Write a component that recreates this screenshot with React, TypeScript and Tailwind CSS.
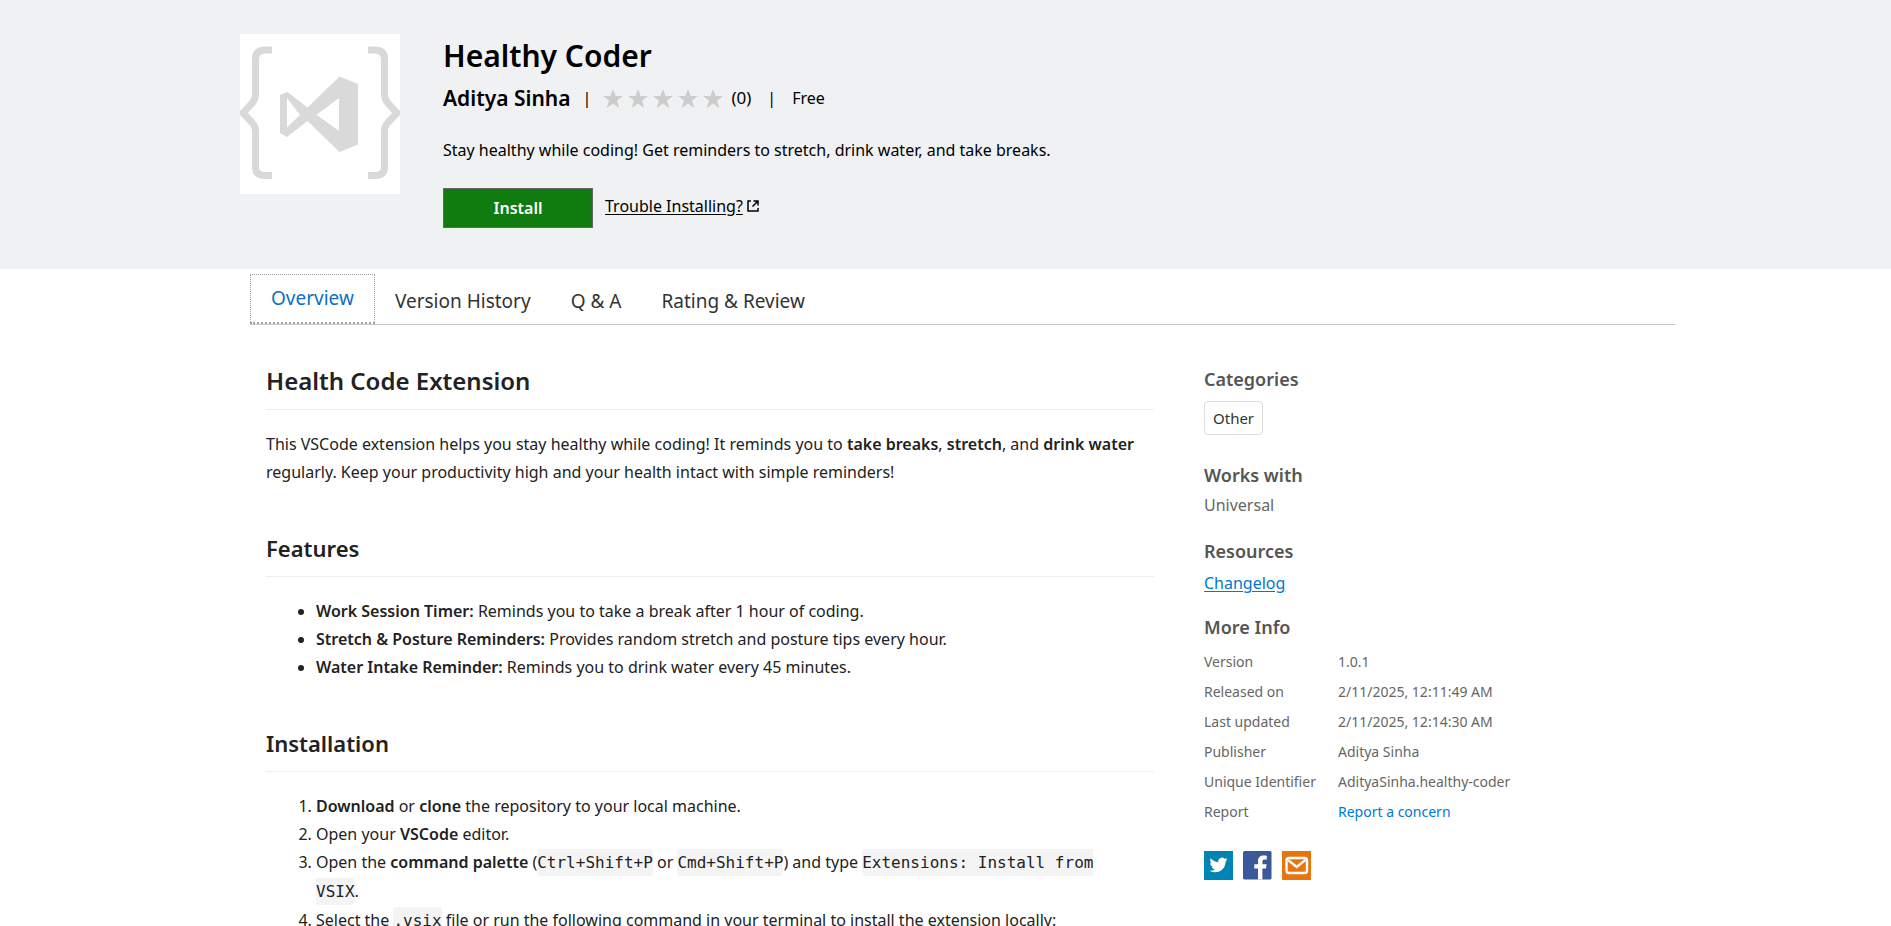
import React from "react";

const details: [string, string][] = [
  ["Version", "1.0.1"],
  ["Released on", "2/11/2025, 12:11:49 AM"],
  ["Last updated", "2/11/2025, 12:14:30 AM"],
  ["Publisher", "Aditya Sinha"],
  ["Unique Identifier", "AdityaSinha.healthy-coder"],
];

function ExtensionLogo() {
  const brace =
    "M32 16h-7q-9.500 0-9.500 9.500V61c0 4-1.500 6-4 9L3 79l8.500 9c2.500 2.500 4 5 4 9v36q0 8.500 9.500 8.500h7";
  return (
    <svg viewBox="0 0 160 160" className="size-40 shrink-0 bg-white" role="img" aria-label="Healthy Coder">
      <g fill="none" stroke="#d9d9d9" strokeWidth="7">
        <path d={brace} />
        <path d={brace} transform="translate(160 0) scale(-1 1)" />
      </g>
      <path
        fill="#d9d9d9"
        fillRule="evenodd"
        d="M40 61l7.500-3 20 15.500 32-31L118 50v60.500l-18.500 7.500-32-31L47 103l-7-4zM47 64v29.500L60 81zM99 64L76.500 80.700 99 97z"
      />
    </svg>
  );
}

function Star() {
  return (
    <svg viewBox="0 0 20 19" className="h-[19px] w-5" fill="#ccc" aria-hidden="true">
      <path d="M10 0l2.600 6.900H20l-6 4.500L16.200 19 10 14.600 3.800 19 6 11.400 0 6.900h7.400z" />
    </svg>
  );
}

function Code({ children }: { children: React.ReactNode }) {
  return (
    <code className="rounded bg-[#f4f4f4] py-1 font-['DejaVu_Sans_Mono',monospace] text-base leading-7">
      {children}
    </code>
  );
}

function SectionTitle({ children }: { children: React.ReactNode }) {
  return <h2 className="border-b border-[#eee] pb-3 text-[22px] leading-8 font-semibold">{children}</h2>;
}

function SideTitle({ children }: { children: React.ReactNode }) {
  return <h3 className="text-lg leading-6 font-semibold text-[#555]">{children}</h3>;
}

export default function App() {
  return (
    <div className="h-screen overflow-y-auto bg-white font-['Noto_Sans','Open_Sans',sans-serif] text-base text-[#222] [scrollbar-width:none]">
      <header className="flex min-h-[269px] gap-[43px] bg-[#eff1f3] pt-[34px] pl-60 text-black">
        <ExtensionLogo />
        <div>
          <h1 className="text-[30px] leading-11 font-semibold">Healthy Coder</h1>
          <div className="flex items-center leading-10">
            <a href="#publisher" className="text-[21px] leading-10 font-semibold">Aditya Sinha</a>
            <span className="ml-3">|</span>
            <span className="ml-3 flex gap-[5px]">
              <Star />
              <Star />
              <Star />
              <Star />
              <Star />
            </span>
            <span className="ml-2 text-[17px]">(0)</span>
            <span className="mx-4">|</span>
            <span>Free</span>
          </div>
          <p className="mt-[18px] leading-7">
            Stay healthy while coding! Get reminders to stretch, drink water, and take breaks.
          </p>
          <div className="mt-6 flex items-start">
            <button className="h-10 w-[150px] border border-[#666] bg-[#107c10] font-semibold text-white">
              Install
            </button>
            <a href="#trouble" className="ml-3 flex items-center gap-1 leading-9">
              <span className="underline underline-offset-2">Trouble Installing?</span>
              <svg viewBox="0 0 12 12" className="size-3" fill="none" stroke="#000" strokeWidth="1.500" aria-hidden="true">
                <path d="M4 1H1v10h10V8M6.500 1H11v4.500M11 1L5.500 6.500" />
              </svg>
            </a>
          </div>
        </div>
      </header>

      <main className="pt-[5px] pr-[216px] pl-[250px]">
        <nav className="flex h-[51px] border-b border-[#c8c8c8] text-[19px] text-[#333]">
          <button className="border border-b-2 border-dotted border-[#a0a0a0] px-5 text-[#106ebe]">Overview</button>
          <button className="px-5 pt-1">Version History</button>
          <button className="px-5 pt-1">Q &amp; A</button>
          <button className="px-5 pt-1">Rating &amp; Review</button>
        </nav>

        <div className="flex gap-[50px] pl-4">
          <article className="w-[888px] pt-10 leading-7">
            <h1 className="border-b border-[#eee] pb-3 text-2xl leading-8 font-semibold">Health Code Extension</h1>
            <p className="mt-5">
              This VSCode extension helps you stay healthy while coding! It reminds you to{" "}
              <b className="font-semibold">take breaks</b>, <b className="font-semibold">stretch</b>, and{" "}
              <b className="font-semibold">drink water</b> regularly. Keep your productivity high and your health
              intact with simple reminders!
            </p>
            <section className="mt-[46px]">
              <SectionTitle>Features</SectionTitle>
              <ul className="mt-5 list-disc pl-[50px]">
                <li><b className="font-semibold">Work Session Timer:</b> Reminds you to take a break after 1 hour of coding.</li>
                <li><b className="font-semibold">Stretch &amp; Posture Reminders:</b> Provides random stretch and posture tips every hour.</li>
                <li><b className="font-semibold">Water Intake Reminder:</b> Reminds you to drink water every 45 minutes.</li>
              </ul>
            </section>
            <section className="mt-[46px]">
              <SectionTitle>Installation</SectionTitle>
              <ol className="mt-5 list-decimal pr-4 pl-[50px]">
                <li><b className="font-semibold">Download</b> or <b className="font-semibold">clone</b> the repository to your local machine.</li>
                <li>Open your <b className="font-semibold">VSCode</b> editor.</li>
                <li>
                  Open the <b className="font-semibold">command palette</b> (<Code>Ctrl+Shift+P</Code> or{" "}
                  <Code>Cmd+Shift+P</Code>) and type <Code>Extensions: Install from VSIX</Code>.
                </li>
                <li>
                  Select the <Code>.vsix</Code> file or run the following command in your terminal to install the
                  extension locally:
                </li>
              </ol>
            </section>
          </article>

          <aside className="flex-1 pt-[42px] text-[#666]">
            <SideTitle>Categories</SideTitle>
            <a href="#other" className="mt-2.5 inline-flex h-[34px] items-center rounded border border-[#ddd] px-2 text-[15px] text-[#333]">
              Other
            </a>
            <div className="mt-7">
              <SideTitle>Works with</SideTitle>
              <p className="mt-1.5 leading-6">Universal</p>
            </div>
            <div className="mt-[22px]">
              <SideTitle>Resources</SideTitle>
              <a href="#changelog" className="mt-2 block leading-6 text-[#0078d4] underline underline-offset-2">Changelog</a>
            </div>
            <div className="mt-5">
              <SideTitle>More Info</SideTitle>
              <table className="mt-2 text-sm">
                <tbody>
                  {details.map(([label, value]) => (
                    <tr key={label} className="h-[30px]">
                      <th scope="row" className="w-[134px] text-left font-normal">{label}</th>
                      <td>{value}</td>
                    </tr>
                  ))}
                  <tr className="h-[30px]">
                    <th scope="row" className="text-left font-normal">Report</th>
                    <td><a href="#report" className="text-[#0078d4]">Report a concern</a></td>
                  </tr>
                </tbody>
              </table>
            </div>
            <div className="mt-6 flex gap-2.5">
              <a href="#twitter" aria-label="Twitter">
                <svg viewBox="0 0 29 29" className="size-[29px]">
                  <path fill="#0084b4" d="M0 0h29v29H0z" />
                  <path
                    fill="#fff"
                    transform="translate(5.500 5) scale(.75)"
                    d="M23.950 4.570a10 10 0 01-2.820.780 4.960 4.960 0 002.160-2.730c-.95.560-2 .960-3.130 1.190a4.920 4.920 0 00-8.380 4.480C7.690 8.100 4.070 6.130 1.640 3.160a4.820 4.820 0 00-.67 2.480c0 1.710.870 3.210 2.190 4.100a4.900 4.900 0 01-2.230-.62v.06a4.920 4.920 0 003.950 4.830 5 5 0 01-2.210.080 4.940 4.940 0 004.600 3.420A9.870 9.870 0 010 19.540a13.990 13.990 0 007.550 2.210c9.050 0 14-7.500 14-13.980 0-.21 0-.42-.02-.63a9.940 9.940 0 002.460-2.550z"
                  />
                </svg>
              </a>
              <a href="#facebook" aria-label="Facebook">
                <svg viewBox="0 0 29 29" className="size-[29px]">
                  <rect width="28.500" height="28.500" rx="1.500" fill="#3b5998" />
                  <path fill="#fff" d="M15 28.500V17.500h-3.700v-4.200H15v-3.200c0-3.600 2.200-5.600 5.500-5.600 1.600 0 3 .1 3.300.2v3.800h-2.200c-1.800 0-2.200.900-2.200 2.100v2.700h4.200l-.6 4.200h-3.600v11z" />
                </svg>
              </a>
              <a href="#email" aria-label="Email">
                <svg viewBox="0 0 29 29" className="size-[29px]">
                  <path fill="#e8740c" d="M0 0h29v29H0z" />
                  <g fill="none" stroke="#fff" strokeWidth="2.400">
                    <rect x="4.500" y="7" width="20.500" height="15" rx="2.500" />
                    <path d="M6 9l8.700 7 8.700-7" />
                  </g>
                </svg>
              </a>
            </div>
          </aside>
        </div>
      </main>
    </div>
  );
}
